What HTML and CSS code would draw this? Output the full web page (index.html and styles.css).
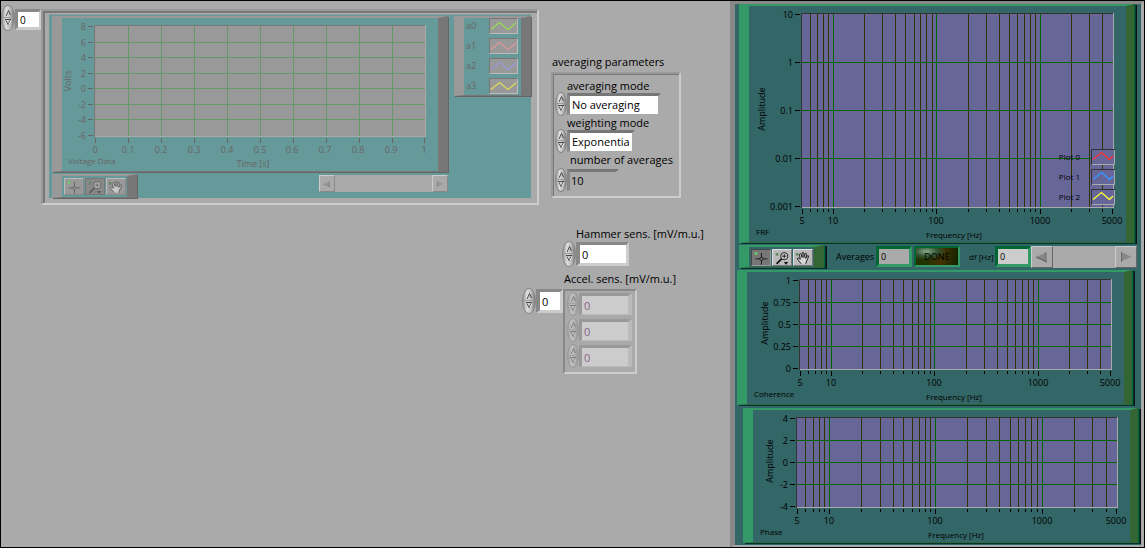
FILE: index.html
```html
<!DOCTYPE html>
<html lang="en">
<head>
<meta charset="utf-8">
<title>FRF measurement</title>
<link rel="stylesheet" href="styles.css">
</head>
<body>
<svg class="defs" aria-hidden="true">
  <symbol id="up" viewBox="0 0 8 8"><path d="M1 7 4 1.500" stroke="#eee" fill="none"/><path d="M2 7 4.500 1.500 6.500 6" fill="none" stroke="#444"/></symbol>
  <symbol id="down" viewBox="0 0 8 8"><path d="M1 1.500H7" stroke="#444"/><path d="M2 2.500 4 6.500 6 2.500" fill="none" stroke="#555"/><path d="M5 6 7 2.500" stroke="#eee"/></symbol>
  <symbol id="cross" viewBox="0 0 20 16"><path d="M4 9.500H9M12 9.500H17M10.500 3V8M10.500 11V16" stroke="currentColor"/><path d="M9 8h3v3H9z" fill="none" stroke="currentColor" stroke-width=".6"/><path d="M3 2h3v3H3z" fill="#6c6"/></symbol>
  <symbol id="lens" viewBox="0 0 20 16"><circle cx="12.500" cy="6.500" r="4" fill="#ddd" fill-opacity=".7" stroke="currentColor"/><path d="M10 6.500H15M12.500 4V9" stroke="currentColor"/><path d="M9.500 9.500 4 15" stroke="currentColor" stroke-width="2"/><path d="M12 13h5l-2.500 3z" fill="currentColor"/><path d="M3 3h3v3H3z" fill="#686"/></symbol>
  <symbol id="hand" viewBox="0 0 20 16"><path d="M8 15 4 10Q3 8 5 8.500L7 10 6 4.500Q7 3 8 4.500L9 8V3Q10 1.500 11 3V8L12.500 3.500Q14 3 14 4.500L13 9 15 6Q16.500 5.500 16 7.500L14 12 13 15" fill="#ddd" fill-opacity=".8" stroke="currentColor"/><path d="M2 3h3v3H2z" fill="#686"/></symbol>
  <symbol id="wave" viewBox="0 0 27 14"><path d="M1 10.500 9.500 3.500 18 10.500 26 4" fill="none" stroke="currentColor" stroke-width="1.300"/></symbol>
  <symbol id="left" viewBox="0 0 20 20"><path d="M4 10 15 5V15z" fill="#888"/><path d="M4 10 15 15" stroke="#555"/><path d="M13 5V15" stroke="#777"/></symbol>
  <symbol id="right" viewBox="0 0 20 20"><path d="M16 10 5 5V15z" fill="#888"/><path d="M16 10 5 15" stroke="#aaa"/><path d="M5.500 5V15" stroke="#666"/></symbol>
</svg>
<main class="app">
  <section class="front">
    <div class="index">
      <div class="spin tall"><button type="button" aria-label="Next channel"><svg><use href="#up"/></svg></button><button type="button" aria-label="Previous channel"><svg><use href="#down"/></svg></button></div>
      <input class="field small" type="text" value="0" aria-label="Channel index">
    </div>

    <div class="cluster">
      <div class="voltage">
        <div class="slab">
          <svg class="plot faded" viewBox="62 18 376 153" role="img" aria-label="Voltage data">
            <rect x="94" y="25" width="332" height="112" fill="#999"/>
            <path d="M128.500 26V136M161.500 26V136M194.500 26V136M227.500 26V136M260.500 26V136M293.500 26V136M326.500 26V136M359.500 26V136M392.500 26V136M95 42.500H425M95 57.500H425M95 73.500H425M95 88.500H425M95 104.500H425M95 119.500H425" stroke="#696"/>
            <path d="M94.500 137V25.500H425" stroke="#777" fill="none"/>
            <path d="M95 136.500H425.500V25" stroke="#aaa" fill="none"/>
            <path d="M88 26.500H93M88 42.500H93M88 57.500H93M88 73.500H93M88 88.500H93M88 104.500H93M88 119.500H93M88 135.500H93M95.500 138V143M128.500 138V143M161.500 138V143M194.500 138V143M227.500 138V143M260.500 138V143M293.500 138V143M326.500 138V143M359.500 138V143M392.500 138V143M424.500 138V143" stroke="#666"/>
            <g class="end"><text x="86" y="30">8</text><text x="86" y="46">6</text><text x="86" y="61">4</text><text x="86" y="77">2</text><text x="86" y="92">0</text><text x="86" y="108">-2</text><text x="86" y="123">-4</text><text x="86" y="139">-6</text></g>
            <g class="mid"><text x="95" y="153">0</text><text x="128" y="153">0.1</text><text x="161" y="153">0.2</text><text x="194" y="153">0.3</text><text x="227" y="153">0.4</text><text x="260" y="153">0.5</text><text x="292" y="153">0.6</text><text x="325" y="153">0.7</text><text x="358" y="153">0.8</text><text x="391" y="153">0.9</text><text x="424" y="153">1</text><text x="253" y="167">Time [s]</text><text transform="translate(71 81) rotate(-90)">Volts</text></g>
            <text class="tag" x="68" y="164">Voltage Data</text>
          </svg>
        </div>
        <div class="slab legend">
          <div>a0<svg class="swatch lime"><use href="#wave"/></svg></div>
          <div>a1<svg class="swatch rose"><use href="#wave"/></svg></div>
          <div>a2<svg class="swatch lilac"><use href="#wave"/></svg></div>
          <div>a3<svg class="swatch gold"><use href="#wave"/></svg></div>
        </div>
        <div class="under">
          <div class="slab tools faded">
            <button type="button" aria-label="Cursor"><svg><use href="#cross"/></svg></button>
            <button type="button" class="on" aria-label="Zoom"><svg><use href="#lens"/></svg></button>
            <button type="button" aria-label="Pan"><svg><use href="#hand"/></svg></button>
          </div>
          <div class="scroll thin"><button type="button" aria-label="Scroll left"><svg><use href="#left"/></svg></button><button type="button" aria-label="Scroll right"><svg><use href="#right"/></svg></button></div>
        </div>
      </div>
    </div>

    <div class="params">
      <h2>averaging parameters</h2>
      <div class="group">
        <label for="mode">averaging mode</label>
        <div class="ctl"><div class="spin"><button type="button" aria-label="Next mode"><svg><use href="#up"/></svg></button><button type="button" aria-label="Previous mode"><svg><use href="#down"/></svg></button></div><select id="mode" class="field ring wide"><option>No averaging</option></select></div>
        <label for="weight">weighting mode</label>
        <div class="ctl"><div class="spin"><button type="button" aria-label="Next weighting"><svg><use href="#up"/></svg></button><button type="button" aria-label="Previous weighting"><svg><use href="#down"/></svg></button></div><select id="weight" class="field ring"><option>Exponentia</option></select></div>
        <label for="count" class="inset">number of averages</label>
        <div class="ctl last"><div class="spin"><button type="button" aria-label="More averages"><svg><use href="#up"/></svg></button><button type="button" aria-label="Fewer averages"><svg><use href="#down"/></svg></button></div><input id="count" class="field ring plain" type="text" value="10"></div>
      </div>
    </div>

    <div class="sens">
      <label for="hammer" class="hammer">Hammer sens. [mV/m.u.]</label>
      <div class="ctl hammer-row"><div class="spin tall"><button type="button" aria-label="Increase"><svg><use href="#up"/></svg></button><button type="button" aria-label="Decrease"><svg><use href="#down"/></svg></button></div><input id="hammer" class="field" type="text" value="0"></div>
      <label for="accel" class="accel">Accel. sens. [mV/m.u.]</label>
      <div class="accel-row">
        <div class="ctl"><div class="spin tall"><button type="button" aria-label="Next sensor"><svg><use href="#up"/></svg></button><button type="button" aria-label="Previous sensor"><svg><use href="#down"/></svg></button></div><input id="accel" class="field narrow" type="text" value="0"></div>
        <div class="array">
          <div class="ctl"><div class="spin dim"><button type="button" disabled aria-label="Increase"><svg><use href="#up"/></svg></button><button type="button" disabled aria-label="Decrease"><svg><use href="#down"/></svg></button></div><input class="field off" type="text" value="0" disabled aria-label="Sensor 0"></div>
          <div class="ctl"><div class="spin dim"><button type="button" disabled aria-label="Increase"><svg><use href="#up"/></svg></button><button type="button" disabled aria-label="Decrease"><svg><use href="#down"/></svg></button></div><input class="field off" type="text" value="0" disabled aria-label="Sensor 1"></div>
          <div class="ctl"><div class="spin dim"><button type="button" disabled aria-label="Increase"><svg><use href="#up"/></svg></button><button type="button" disabled aria-label="Decrease"><svg><use href="#down"/></svg></button></div><input class="field off" type="text" value="0" disabled aria-label="Sensor 2"></div>
        </div>
      </div>
    </div>
  </section>

  <section class="pane">
    <div class="slab live frf">
      <svg class="plot" viewBox="749 6 377 236" role="img" aria-label="FRF">
        <rect x="801" y="13" width="313" height="195" fill="#669"/>
        <path d="M810.500 14V207M817.500 14V207M823.500 14V207M828.500 14V207M864.500 14V207M882.500 14V207M895.500 14V207M905.500 14V207M914.500 14V207M920.500 14V207M926.500 14V207M932.500 14V207M968.500 14V207M986.500 14V207M999.500 14V207M1009.500 14V207M1017.500 14V207M1024.500 14V207M1030.500 14V207M1035.500 14V207M1071.500 14V207M1089.500 14V207M1102.500 14V207" stroke="#330"/>
        <path d="M833.500 14V207M936.500 14V207M1040.500 14V207M802 62.500H1113M802 110.500H1113M802 158.500H1113" stroke="#060"/>
        <path d="M801.500 208V13.500H1113" stroke="#333" fill="none"/>
        <path d="M802 207.500H1113.500V13" stroke="#aaa" fill="none"/>
        <path d="M795 14.500H800M795 62.500H800M795 110.500H800M795 158.500H800M795 206.500H800M802.500 209V214M833.500 209V214M936.500 209V214M1040.500 209V214M1112.500 209V214M810.500 209V212M817.500 209V212M823.500 209V212M828.500 209V212M864.500 209V212M882.500 209V212M895.500 209V212M905.500 209V212M914.500 209V212M920.500 209V212M926.500 209V212M932.500 209V212M968.500 209V212M986.500 209V212M999.500 209V212M1009.500 209V212M1017.500 209V212M1024.500 209V212M1030.500 209V212M1035.500 209V212M1071.500 209V212M1089.500 209V212M1102.500 209V212" stroke="#000"/>
        <g class="end"><text x="793" y="18">10</text><text x="793" y="66">1</text><text x="793" y="114">0.1</text><text x="793" y="162">0.01</text><text x="793" y="210">0.001</text></g>
        <g class="mid"><text x="802" y="224">5</text><text x="833" y="224">10</text><text x="936" y="224">100</text><text x="1040" y="224">1000</text><text x="1112" y="224">5000</text><text class="tag" x="954" y="238">Frequency [Hz]</text><text transform="translate(765 109) rotate(-90)">Amplitude</text></g>
        <text class="tag" x="756" y="235">FRF</text>
        <g class="end tag"><text x="1080" y="160">Plot 0</text><text x="1080" y="180">Plot 1</text><text x="1080" y="200">Plot 2</text></g>
        <g fill="#669"><path d="M1091 149h24v16h-24zM1091 169h24v16h-24zM1091 189h24v16h-24z"/></g>
        <path d="M1091.500 165V149.500H1115M1091.500 185V169.500H1115M1091.500 205V189.500H1115" fill="none" stroke="#333"/>
        <path d="M1092 164.500H1114.500V150M1092 184.500H1114.500V170M1092 204.500H1114.500V190" fill="none" stroke="#aaa"/>
        <path d="M1093 159.500 1101.500 152.500 1109.500 159.500 1113 156" fill="none" stroke="#f33" stroke-width="1.300"/>
        <path d="M1093 179.500 1101.500 172.500 1109.500 179.500 1113 176" fill="none" stroke="#39f" stroke-width="1.300"/>
        <path d="M1093 199.500 1101.500 192.500 1109.500 199.500 1113 196" fill="none" stroke="#ff3" stroke-width="1.300"/>
      </svg>
    </div>

    <div class="bar">
      <div class="slab live tools">
        <button type="button" class="on" aria-label="Cursor"><svg><use href="#cross"/></svg></button>
        <button type="button" aria-label="Zoom"><svg><use href="#lens"/></svg></button>
        <button type="button" aria-label="Pan"><svg><use href="#hand"/></svg></button>
      </div>
      <label for="avgs" class="avgs">Averages</label>
      <input id="avgs" class="readout" type="text" value="0">
      <button type="button" class="led">DONE</button>
      <label for="df" class="df">df [Hz]</label>
      <input id="df" class="readout bright" type="text" value="0">
      <div class="scroll"><button type="button" aria-label="Scroll left"><svg><use href="#left"/></svg></button><button type="button" aria-label="Scroll right"><svg><use href="#right"/></svg></button></div>
    </div>

    <div class="slab live coherence">
      <svg class="plot" viewBox="747 272 377 132" role="img" aria-label="Coherence">
        <rect x="799" y="279" width="313" height="91" fill="#669"/>
        <path d="M808.500 280V369M815.500 280V369M821.500 280V369M826.500 280V369M862.500 280V369M880.500 280V369M893.500 280V369M903.500 280V369M912.500 280V369M918.500 280V369M924.500 280V369M930.500 280V369M966.500 280V369M984.500 280V369M997.500 280V369M1007.500 280V369M1015.500 280V369M1022.500 280V369M1028.500 280V369M1033.500 280V369M1069.500 280V369M1087.500 280V369M1100.500 280V369" stroke="#330"/>
        <path d="M831.500 280V369M934.500 280V369M1038.500 280V369M800 302.500H1111M800 324.500H1111M800 346.500H1111" stroke="#060"/>
        <path d="M799.500 370V279.500H1111" stroke="#333" fill="none"/>
        <path d="M800 369.500H1111.500V279" stroke="#aaa" fill="none"/>
        <path d="M793 280.500H798M793 302.500H798M793 324.500H798M793 346.500H798M793 368.500H798M800.500 371V376M831.500 371V376M934.500 371V376M1038.500 371V376M1110.500 371V376M808.500 371V374M815.500 371V374M821.500 371V374M826.500 371V374M862.500 371V374M880.500 371V374M893.500 371V374M903.500 371V374M912.500 371V374M918.500 371V374M924.500 371V374M930.500 371V374M966.500 371V374M984.500 371V374M997.500 371V374M1007.500 371V374M1015.500 371V374M1022.500 371V374M1028.500 371V374M1033.500 371V374M1069.500 371V374M1087.500 371V374M1100.500 371V374" stroke="#000"/>
        <g class="end"><text x="791" y="284">1</text><text x="791" y="306">0.75</text><text x="791" y="328">0.5</text><text x="791" y="350">0.25</text><text x="791" y="372">0</text></g>
        <g class="mid"><text x="800" y="386">5</text><text x="831" y="386">10</text><text x="934" y="386">100</text><text x="1038" y="386">1000</text><text x="1110" y="386">5000</text><text class="tag" x="954" y="400">Frequency [Hz]</text><text transform="translate(768 323) rotate(-90)">Amplitude</text></g>
        <text class="tag" x="754" y="397">Coherence</text>
      </svg>
    </div>

    <div class="slab live phase">
      <svg class="plot" viewBox="753 410 377 132" role="img" aria-label="Phase">
        <rect x="796" y="417" width="322" height="91" fill="#669"/>
        <path d="M805.500 418V507M813.500 418V507M819.500 418V507M824.500 418V507M861.500 418V507M880.500 418V507M893.500 418V507M903.500 418V507M912.500 418V507M919.500 418V507M925.500 418V507M930.500 418V507M967.500 418V507M986.500 418V507M999.500 418V507M1010.500 418V507M1018.500 418V507M1025.500 418V507M1031.500 418V507M1037.500 418V507M1074.500 418V507M1092.500 418V507M1106.500 418V507" stroke="#330"/>
        <path d="M829.500 418V507M935.500 418V507M1042.500 418V507M797 440.500H1117M797 462.500H1117M797 484.500H1117" stroke="#060"/>
        <path d="M796.500 508V417.500H1117" stroke="#333" fill="none"/>
        <path d="M797 507.500H1117.500V417" stroke="#aaa" fill="none"/>
        <path d="M790 418.500H795M790 440.500H795M790 462.500H795M790 484.500H795M790 506.500H795M797.500 509V514M829.500 509V514M935.500 509V514M1042.500 509V514M1116.500 509V514M805.500 509V512M813.500 509V512M819.500 509V512M824.500 509V512M861.500 509V512M880.500 509V512M893.500 509V512M903.500 509V512M912.500 509V512M919.500 509V512M925.500 509V512M930.500 509V512M967.500 509V512M986.500 509V512M999.500 509V512M1010.500 509V512M1018.500 509V512M1025.500 509V512M1031.500 509V512M1037.500 509V512M1074.500 509V512M1092.500 509V512M1106.500 509V512" stroke="#000"/>
        <g class="end"><text x="788" y="422">4</text><text x="788" y="444">2</text><text x="788" y="466">0</text><text x="788" y="488">-2</text><text x="788" y="510">-4</text></g>
        <g class="mid"><text x="797" y="524">5</text><text x="829" y="524">10</text><text x="935" y="524">100</text><text x="1042" y="524">1000</text><text x="1116" y="524">5000</text><text class="tag" x="956" y="538">Frequency [Hz]</text><text transform="translate(773 461) rotate(-90)">Amplitude</text></g>
        <text class="tag" x="760" y="535">Phase</text>
      </svg>
    </div>
  </section>
</main>
</body>
</html>
```
FILE: styles.css
```css
* { box-sizing: border-box; }

body {
  margin: 0;
  background: #aaa;
  color: #000;
  font: 11px/16px "Open Sans", "Noto Sans", sans-serif;
}

button, input, select { font: inherit; color: inherit; margin: 0; padding: 0; border: 0; border-radius: 0; }
button { display: grid; place-items: center; background: none; }
.defs { position: absolute; width: 0; height: 0; }

.app {
  display: flex;
  min-height: 100vh;
  border: 1px solid #000;
}

.front {
  display: grid;
  grid-template-columns: 40px 498px 191px;
  grid-template-rows: auto 1fr;
  align-items: start;
  row-gap: 21px;
}

/* Numeric controls */
.index { display: flex; padding-top: 4px; }

.spin {
  flex: none;
  width: 12px;
  height: 24px;
  display: grid;
  grid-template-rows: 1fr 1fr;
  border: 1px solid #888;
  border-radius: 50%;
  background: linear-gradient(90deg, #999, #ddd 35%, #bbb 70%, #777);
  overflow: hidden;
}
.spin.tall { width: 14px; height: 26px; }
.spin svg { width: 8px; height: 8px; }
.spin button:first-child { align-items: end; border-bottom: 1px solid #999; }
.spin button:last-child { align-items: start; }
.spin.dim { opacity: .45; }

.ctl { display: flex; align-items: center; }

.field {
  width: 53px;
  height: 24px;
  padding: 0 2px;
  background: #fff;
  border: solid;
  border-width: 3px 3px 3px 4px;
  border-color: #888 #ccc #ccc #888;
  border-radius: 0;
  outline: 0;
}
.field.small { width: 26px; height: 21px; margin-top: 4px; font-size: 10px; border-width: 3px 2px 3px 3px; }
.field.narrow { width: 27px; }
.field.ring {
  width: 68px;
  height: 22px;
  appearance: none;
  border-width: 3px 3px 1px 3px;
  border-color: #777 #aaa #aaa #888;
}
.field.wide { width: 94px; }
.field.plain { width: 52px; background: #aaa; padding: 0 1px; }
.field.off { width: 53px; height: 22px; background: #ccc; color: #868; border-width: 3px 4px 1px 3px; border-color: #999 #bbb #bbb #999; }

/* Voltage cluster */
.cluster {
  margin-top: 8px;
  padding: 2px 6px 5px 4px;
  border: 2px solid;
  border-color: #999 #ccc #ccc #999;
  background: #aaa;
  box-shadow: inset 2px 2px #777;
}
.voltage {
  display: grid;
  grid-template-columns: 1fr 77px;
  column-gap: 6px;
  padding: 1px 0 0 3px;
  margin: 1px 0 0 2px;
  border-top: 1px solid #999;
  background: #699;
}

.slab {
  border: solid;
  border-width: 2px 10px 1px 10px;
  border-color: #999 #777 #777 #999;
  background: #699;
  box-shadow: 1px 1px #666;
}
.slab.live {
  border-width: 2px 8px 1px 10px;
  border-color: #396 #363 #363 #396;
  background: #366;
  box-shadow: 1px 0 #063, 2px 1px #033, 3px 1px #111;
}

.plot { display: block; width: 100%; height: auto; font-size: 9px; }
.plot.faded, .legend { fill: #666; color: #666; }
.end { text-anchor: end; }
.mid { text-anchor: middle; }
.tag { font-size: 8px; }

.legend { align-self: start; font-size: 9px; }
.legend div { display: flex; align-items: center; justify-content: space-between; height: 16px; margin-bottom: 4px; padding: 0 3px 0 2px; }
.legend div:last-child { margin-bottom: 1px; }
.swatch { width: 29px; height: 16px; background: #999; border: 1px solid; border-color: #777 #bbb #bbb #777; fill: none; }
.lime use { color: #9d5; }
.rose use { color: #d99; }
.lilac use { color: #99d; }
.gold use { color: #dd5; }

.under { grid-column: 1; display: flex; justify-content: space-between; padding-top: 2px; }
.tools, .slab.live.tools { display: flex; gap: 1px; padding: 2px 1px 2px 2px; border-right-width: 10px; }
.tools button { width: 20px; height: 17px; background: #bbb; border: 1px solid; border-color: #ddd #777 #777 #ddd; color: #111; }
.tools button.on { background: #777; border-color: #444 #999 #999 #444; }
.tools svg { width: 18px; height: 15px; }
.tools.faded button { background: #999; border-color: #bbb #888 #888 #bbb; color: #555; }
.tools.faded .on { background: #888; border-color: #777; }
.tools.faded svg { opacity: .85; }

.scroll { display: flex; justify-content: space-between; flex: 1; height: 22px; background: #aaa; }
.scroll button { width: 22px; border: 1px solid; border-color: #ccc #666 #666 #ccc; }
.scroll svg { width: 20px; height: 20px; }
.scroll.thin { flex: none; width: 129px; height: 17px; margin-top: 1px; }
.scroll.thin button { width: 16px; border-color: #ccc #888 #888 #ccc; }
.scroll.thin svg { width: 12px; height: 12px; opacity: .6; }

/* Averaging parameters */
.params { padding: 53px 0 0 12px; }
h2 { margin: 0 0 2px 1px; font: inherit; }
.group {
  width: 130px;
  padding: 4px 0 5px 2px;
  border: 2px solid;
  border-color: #999 #ccc #ccc #999;
  box-shadow: inset 1px 1px #777;
}
.group label { display: block; height: 14px; line-height: 15px; margin-left: 12px; white-space: nowrap; }
.group label.inset { margin-left: 15px; }
.group .ctl { height: 23px; }
.group .last { margin-top: 2px; }

/* Sensitivities */
.sens { grid-column: 1 / -1; padding-left: 521px; }
.sens label { display: block; line-height: 15px; white-space: nowrap; }
.hammer { margin-left: 54px; }
.hammer-row { margin-left: 40px; }
.accel { margin: 4px 0 0 42px; }
.accel-row { display: flex; align-items: flex-start; margin-top: 2px; }
.array {
  margin-top: 1px;
  padding: 0 3px 3px 2px;
  border: 2px solid;
  border-color: #888 #ccc #ccc #888;
}
.array .ctl { height: 26px; }

/* Analysis pane */
.pane {
  flex: 1;
  min-width: 0;
  background: #366;
  border: solid;
  border-width: 3px 3px 2px 5px;
  border-color: #888 #aaa #aaa #888;
}
.frf { margin: 0 7px 2px 4px; }
.coherence { margin: 2px 9px 3px 2px; }
.phase { margin: 0 3px 0 8px; }

.bar { display: flex; align-items: center; height: 23px; margin: 0 4px; font-size: 9px; }
.bar .tools { height: 23px; margin-right: 12px; }
.avgs { width: 40px; }
.df { width: 26px; margin-left: 9px; font-size: 8px; white-space: nowrap; }
.readout {
  width: 36px;
  height: 21px;
  padding: 0 2px;
  background: #aaa;
  border: 3px solid;
  border-color: #063 #396 #396 #063;
}
.readout.bright { background: #ccc; }
.led {
  width: 46px;
  height: 21px;
  margin-left: 2px;
  border: 2px solid;
  border-color: #063 #396 #396 #063;
  background: radial-gradient(ellipse at 25% 20%, #8a8 0, #353 25%, transparent 45%), linear-gradient(100deg, #230 30%, #430 60%, #120);
}
```
